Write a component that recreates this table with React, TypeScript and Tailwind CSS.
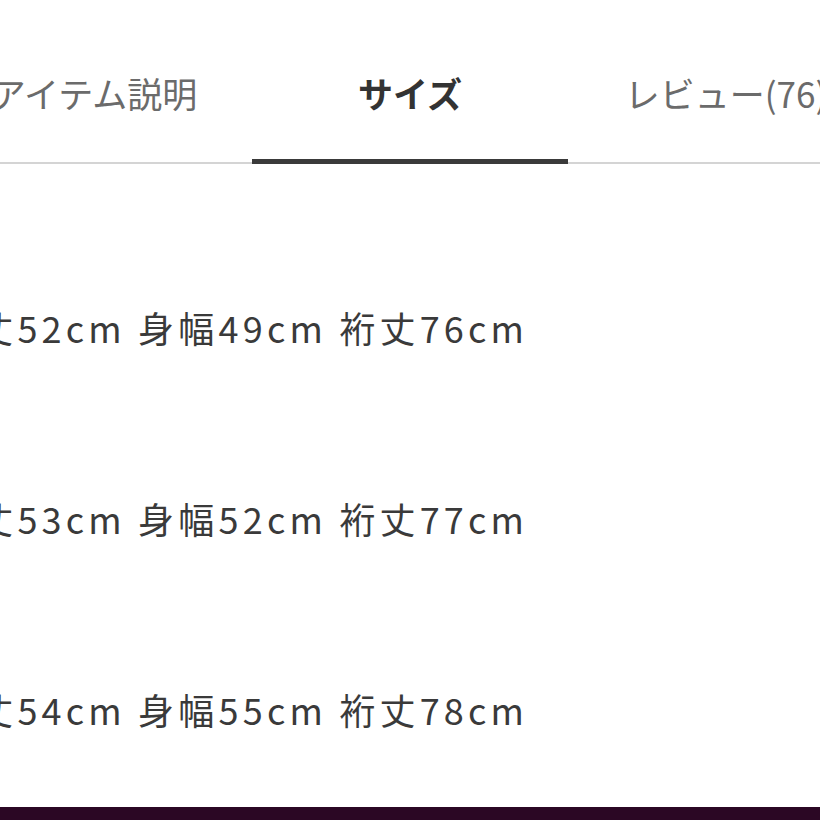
const tabs = [
  { label: 'アイテム説明', active: false },
  { label: 'サイズ', active: true },
  { label: 'レビュー(76)', active: false },
];

const sizes = [
  '着丈52cm 身幅49cm 裄丈76cm',
  '着丈53cm 身幅52cm 裄丈77cm',
  '着丈54cm 身幅55cm 裄丈78cm',
];

export default function App() {
  return (
    <div
      className="w-[820px] h-[820px] overflow-hidden bg-white flex flex-col"
      style={{ fontFamily: '"Noto Sans CJK JP", "Noto Sans", sans-serif' }}
    >
      <div className="relative h-[164px] shrink-0 border-b-2 border-[#d4d4d4]">
        <div className="flex -ml-[64px] h-full">
          {tabs.map((t) => (
            <div key={t.label} className="w-[316px] shrink-0 flex flex-col">
              <div
                className={
                  'flex-1 flex items-center justify-center pt-[27px] text-[35px] ' +
                  (t.active ? 'font-bold text-[#333333]' : 'text-[#6b6b6b]')
                }
              >
                {t.label}
              </div>
              <div className={'h-[5px] -mb-[2px] ' + (t.active ? 'bg-[#3a3a3a]' : 'bg-transparent')} />
            </div>
          ))}
        </div>
      </div>

      <div className="flex-1 flex flex-col pt-[67px]">
        {sizes.map((s) => (
          <div key={s} className="h-[191px] flex items-center">
            <p className="-ml-[63px] text-[36px] tracking-[4.2px] text-[#3a3a3a] whitespace-pre">{s}</p>
          </div>
        ))}
      </div>

      <div className="h-[13px] shrink-0 bg-[#2b0724]" />
    </div>
  );
}
